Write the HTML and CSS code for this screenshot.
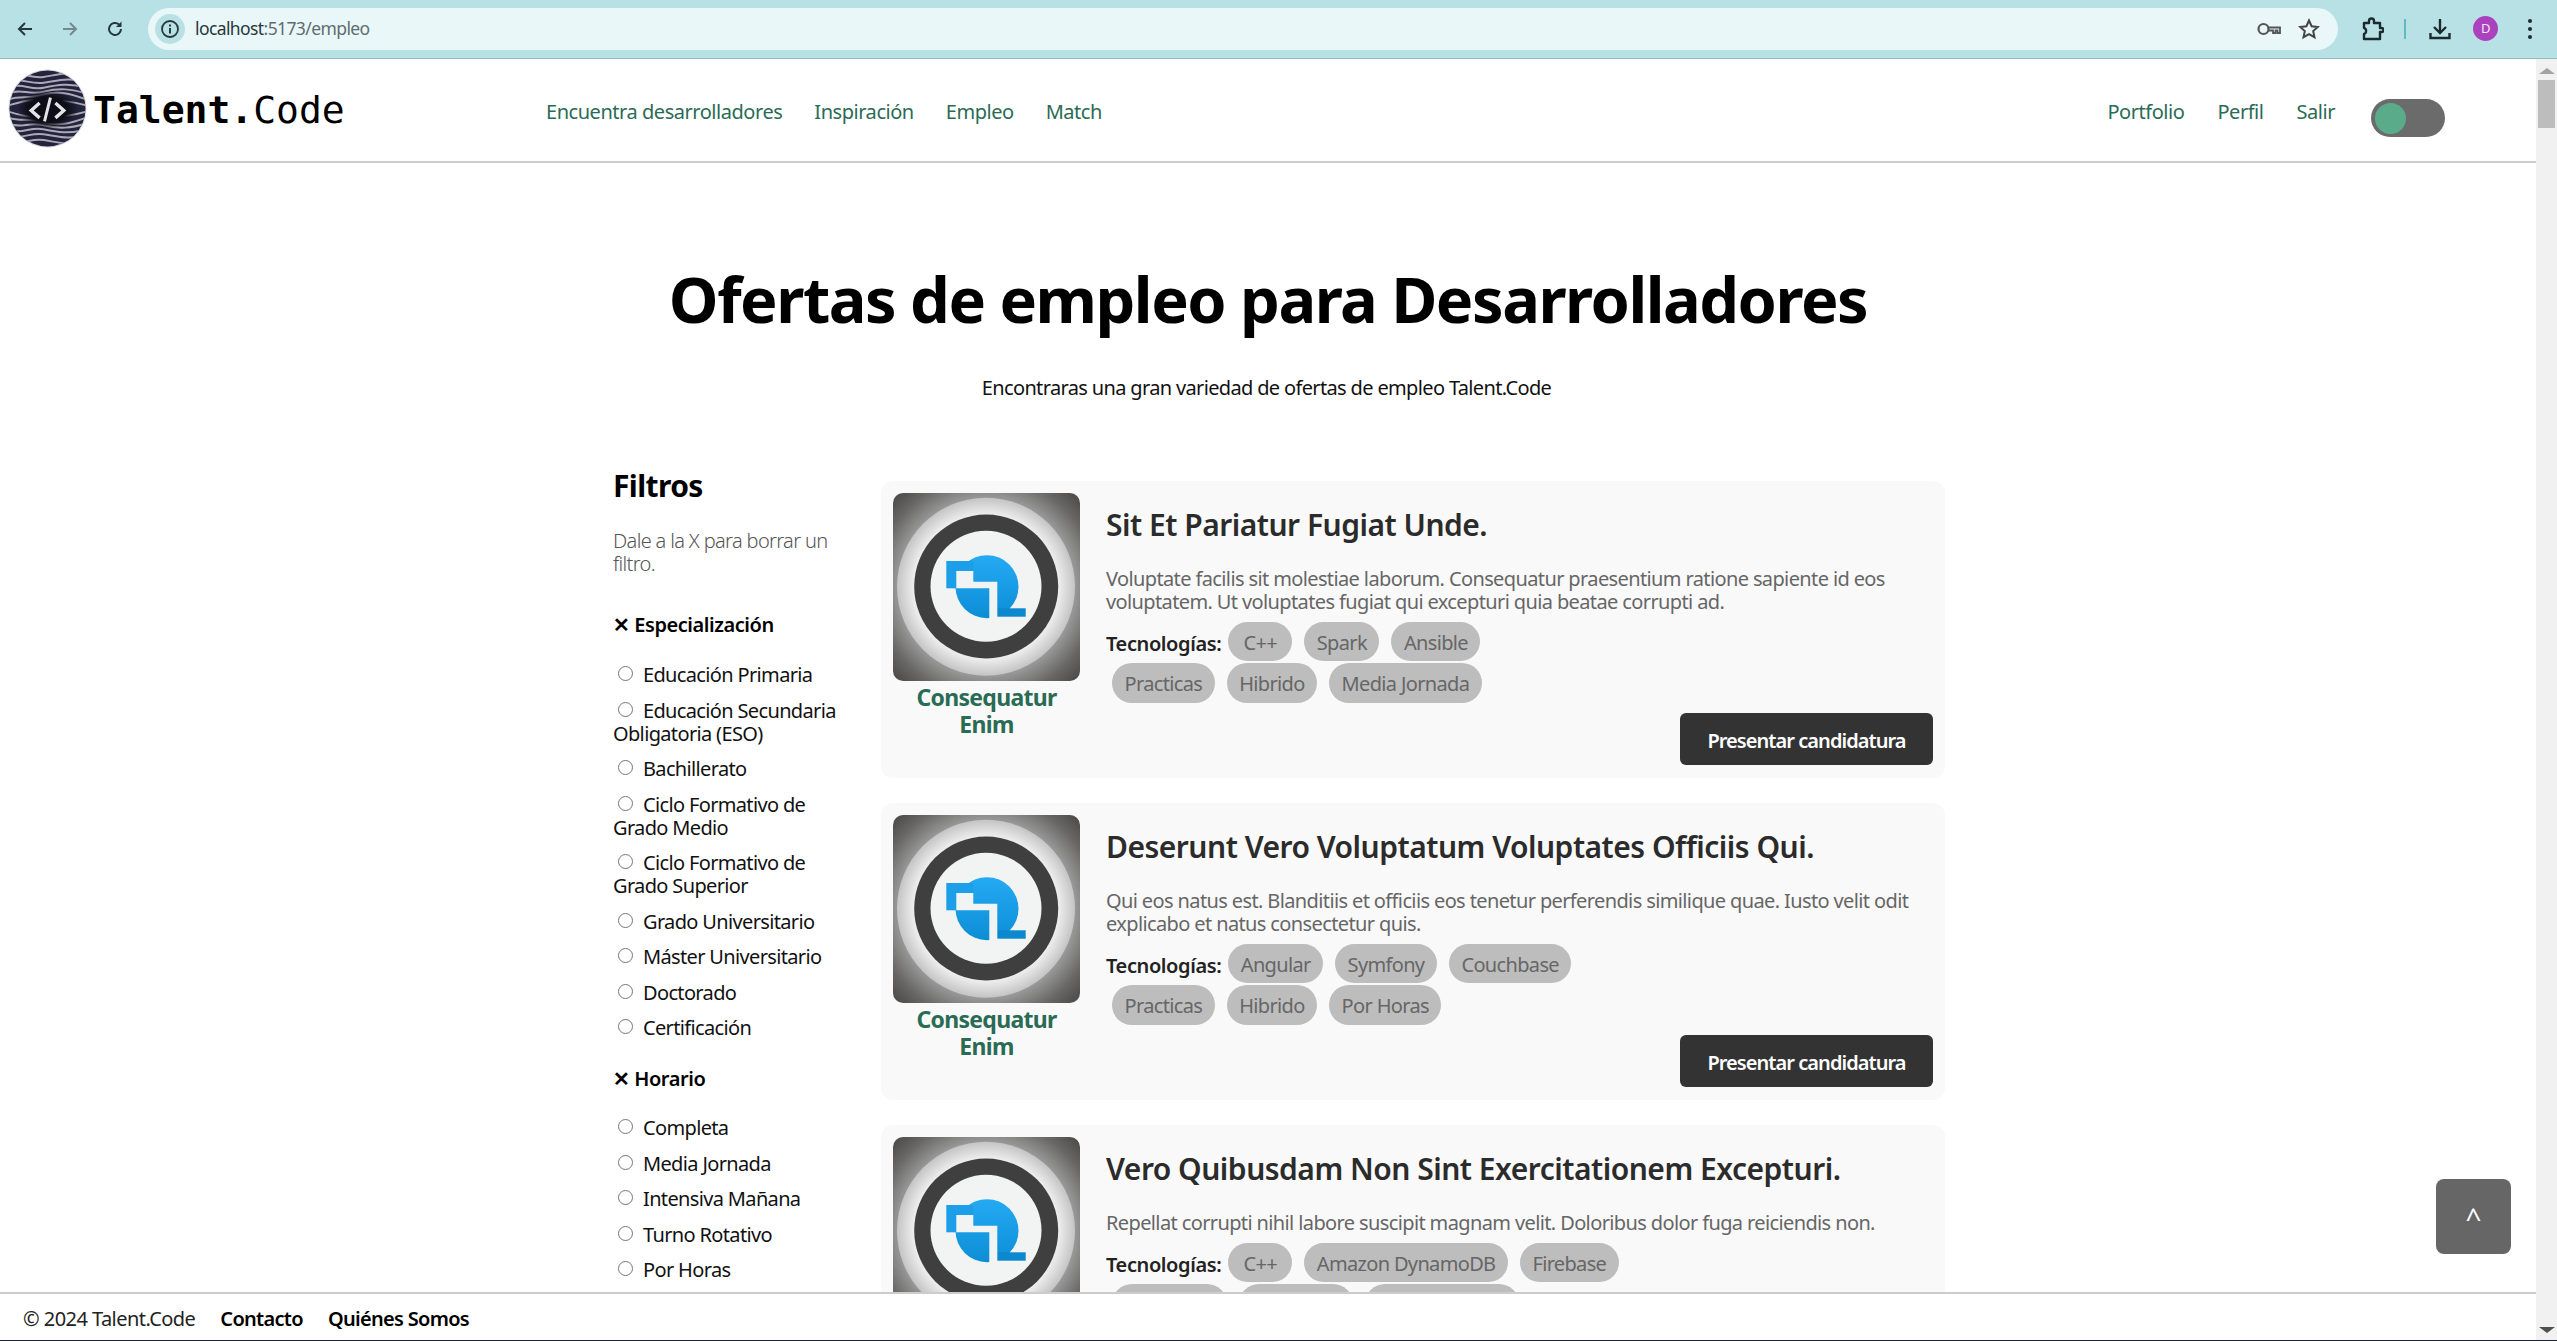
FILE: index.html
```html
<!DOCTYPE html>
<html lang="es">
<head>
    <meta charset="UTF-8">
    <meta name="viewport" content="width=device-width, initial-scale=1.0">
    <title>Talent.Code - Empleo</title>
    <link rel="stylesheet" href="styles.css">
</head>
<body>
    <svg class="defs" width="0" height="0">
        <defs>
            <radialGradient id="bg-grad" cx="50%" cy="50%" r="72%">
                <stop offset="62%" stop-color="#a4a4a4"/>
                <stop offset="82%" stop-color="#686766"/>
                <stop offset="100%" stop-color="#434241"/>
            </radialGradient>
            <radialGradient id="ring-grad" cx="50%" cy="50%" r="50%">
                <stop offset="82%" stop-color="#ececec"/>
                <stop offset="100%" stop-color="#c4c4c4"/>
            </radialGradient>
            <linearGradient id="blue-grad" x1="0" y1="0" x2="0" y2="1">
                <stop offset="0%" stop-color="#24aaf3"/>
                <stop offset="100%" stop-color="#0c8ed6"/>
            </linearGradient>
            <radialGradient id="eye-grad" cx="50%" cy="50%" r="50%">
                <stop offset="65%" stop-color="#0e0e18"/>
                <stop offset="100%" stop-color="#0e0e18" stop-opacity="0"/>
            </radialGradient>
            <clipPath id="logo-clip"><circle cx="40" cy="40" r="38.500"/></clipPath>
            <symbol id="company" viewBox="0 0 187 188">
                <rect width="187" height="188" rx="10" fill="url(#bg-grad)"/>
                <circle cx="93" cy="93.700" r="89" fill="url(#ring-grad)"/>
                <circle cx="93.200" cy="93.500" r="72" fill="#3f3f3f"/>
                <circle cx="93" cy="93.300" r="55.500" fill="#f2f4f4"/>
                <circle cx="94" cy="93.700" r="31.500" fill="url(#blue-grad)"/>
                <rect x="53.300" y="68" width="27" height="27.300" fill="#1c9fe8"/>
                <rect x="104.300" y="115.300" width="28.400" height="8.400" fill="#0c88cf"/>
                <path d="M63.300 78H80.300V88.700H104.300V127H96.300V95.300H63.300Z" fill="#f2f4f4"/>
            </symbol>
        </defs>
    </svg>

    <div class="browser-bar">
        <svg class="bar-icon back" width="18" height="18" viewBox="0 0 18 18"><path d="M16 9H3M9 3L3 9l6 6" fill="none" stroke="#26383c" stroke-width="2"/></svg>
        <svg class="bar-icon forward" width="18" height="18" viewBox="0 0 18 18"><path d="M2 9h13M9 3l6 6-6 6" fill="none" stroke="#75888c" stroke-width="2"/></svg>
        <svg class="bar-icon reload" width="18" height="18" viewBox="0 0 18 18"><path d="M15 9a6 6 0 1 1-2-4.500" fill="none" stroke="#26383c" stroke-width="2"/><path d="M15.500 1.500v5.500H10z" fill="#26383c"/></svg>
        <div class="url-box">
            <span class="info-badge">
                <svg width="20" height="20" viewBox="0 0 20 20"><circle cx="10" cy="10" r="8" fill="none" stroke="#26383c" stroke-width="1.800"/><path d="M10 9v5.500M10 5.500v2" stroke="#26383c" stroke-width="2"/></svg>
            </span>
            <span class="url-text">localhost<span class="url-rest">:5173/empleo</span></span>
            <svg class="url-key" width="24" height="14" viewBox="0 0 24 14"><circle cx="6.500" cy="7" r="5" fill="none" stroke="#555" stroke-width="2.200"/><path d="M11 5.500h12v5.500h-2.500V8.500h-2v2.500h-2.500V8.500H11" fill="none" stroke="#555" stroke-width="1.800"/></svg>
            <svg class="url-star" width="22" height="22" viewBox="0 0 22 22"><path d="M11 2.500l2.600 5.700 6.200.700-4.600 4.200 1.300 6.100L11 16.100l-5.500 3.100 1.300-6.100-4.600-4.200 6.200-.700z" fill="none" stroke="#444" stroke-width="2"/></svg>
        </div>
        <svg class="bar-icon puzzle" width="22" height="24" viewBox="0 0 22 24"><path d="M2 6h5V4a2.500 2.500 0 0 1 5 0v2h6v5h1.500a2 2 0 0 1 0 4H18v7H2v-5a2.500 2.500 0 0 0 2-3 2.500 2.500 0 0 0-2-3z" fill="none" stroke="#1d2a2d" stroke-width="2.400" stroke-linejoin="round"/></svg>
        <span class="bar-divider"></span>
        <svg class="bar-icon download" width="22" height="22" viewBox="0 0 22 22"><path d="M11 1v13M5 9l6 6 6-6M1.500 15v5h19v-5" fill="none" stroke="#1d2a2d" stroke-width="2.400"/></svg>
        <span class="avatar">D</span>
        <span class="dots"><i></i><i></i><i></i></span>
    </div>

    <div class="window">
        <div class="page">
            <header class="topbar">
                <a class="brand" href="#">
                    <svg class="brand-logo" width="79" height="79" viewBox="0 0 80 80">
                        <circle cx="40" cy="40" r="39.500" fill="#d4d6dc"/>
                        <circle cx="40" cy="40" r="38.500" fill="#23233c"/>
                        <g clip-path="url(#logo-clip)" fill="none" stroke="#a9a9b8" stroke-width="2">
                            <path d="M0 7c14-5 22 3 36 1s26-6 44-1"/>
                            <path d="M0 13c14-5 22 3 36 1s26-6 44-1"/>
                            <path d="M0 19c14-6 22 3 36 0s26-5 44 0"/>
                            <path d="M0 25c14-6 20 2 36-2s28-3 44 2"/>
                            <path d="M0 31c12-5 20 0 36-5s30 0 44 5"/>
                            <path d="M0 37c14-4 20-6 36-6s30 2 44 6"/>
                            <path d="M0 43c14 4 20 6 36 6s30-2 44-6"/>
                            <path d="M0 49c12 5 20 0 36 5s30 0 44-5"/>
                            <path d="M0 55c14 6 20-2 36 2s28 3 44-2"/>
                            <path d="M0 61c14 6 22-3 36 0s26 5 44 0"/>
                            <path d="M0 67c14 5 22-3 36-1s26 6 44 1"/>
                            <path d="M0 73c14 5 22-3 36-1s26 6 44 1"/>
                        </g>
                        <ellipse cx="40" cy="41" rx="31" ry="20" fill="url(#eye-grad)"/>
                        <path d="M32 34.500L23.500 42l8.500 7.500M48 34.500l8.500 7.500-8.500 7.500" fill="none" stroke="#e4e4e8" stroke-width="3.400"/>
                        <path d="M43 29L37 53" stroke="#e4e4e8" stroke-width="3"/>
                    </svg>
                    <span class="brand-name"><b>Talent.</b>Code</span>
                </a>
                <nav class="nav-main">
                    <a href="#">Encuentra desarrolladores</a>
                    <a href="#">Inspiración</a>
                    <a href="#">Empleo</a>
                    <a href="#">Match</a>
                </nav>
                <nav class="nav-user">
                    <a href="#">Portfolio</a>
                    <a href="#">Perfil</a>
                    <a href="#">Salir</a>
                </nav>
                <div class="toggle"><span class="knob"></span></div>
            </header>

            <main class="content">
                <h1>Ofertas de empleo para Desarrolladores</h1>
                <p class="lead">Encontraras una gran variedad de ofertas de empleo Talent.Code</p>

                <div class="layout">
                    <aside class="filters">
                        <h2>Filtros</h2>
                        <p class="filters-note">Dale a la X para borrar un filtro.</p>

                        <h3><span class="clear">✕</span> Especialización</h3>
                        <label class="opt"><input type="radio" name="esp">Educación Primaria</label>
                        <label class="opt"><input type="radio" name="esp">Educación Secundaria Obligatoria (ESO)</label>
                        <label class="opt"><input type="radio" name="esp">Bachillerato</label>
                        <label class="opt"><input type="radio" name="esp">Ciclo Formativo de Grado Medio</label>
                        <label class="opt"><input type="radio" name="esp">Ciclo Formativo de Grado Superior</label>
                        <label class="opt"><input type="radio" name="esp">Grado Universitario</label>
                        <label class="opt"><input type="radio" name="esp">Máster Universitario</label>
                        <label class="opt"><input type="radio" name="esp">Doctorado</label>
                        <label class="opt"><input type="radio" name="esp">Certificación</label>

                        <h3><span class="clear">✕</span> Horario</h3>
                        <label class="opt"><input type="radio" name="hor">Completa</label>
                        <label class="opt"><input type="radio" name="hor">Media Jornada</label>
                        <label class="opt"><input type="radio" name="hor">Intensiva Mañana</label>
                        <label class="opt"><input type="radio" name="hor">Turno Rotativo</label>
                        <label class="opt"><input type="radio" name="hor">Por Horas</label>
                    </aside>

                    <section class="jobs">
                        <article class="job">
                            <div class="job-company">
                                <svg class="job-img" width="187" height="188"><use href="#company"/></svg>
                                <a href="#">Consequatur Enim</a>
                            </div>
                            <div class="job-body">
                                <h2>Sit Et Pariatur Fugiat Unde.</h2>
                                <p>Voluptate facilis sit molestiae laborum. Consequatur praesentium ratione sapiente id eos voluptatem. Ut voluptates fugiat qui excepturi quia beatae corrupti ad.</p>
                                <div class="tags"><strong>Tecnologías:</strong><span>C++</span><span>Spark</span><span>Ansible</span></div>
                                <div class="tags tags-info"><span>Practicas</span><span>Hibrido</span><span>Media Jornada</span></div>
                                <a class="apply" href="#">Presentar candidatura</a>
                            </div>
                        </article>

                        <article class="job">
                            <div class="job-company">
                                <svg class="job-img" width="187" height="188"><use href="#company"/></svg>
                                <a href="#">Consequatur Enim</a>
                            </div>
                            <div class="job-body">
                                <h2>Deserunt Vero Voluptatum Voluptates Officiis Qui.</h2>
                                <p>Qui eos natus est. Blanditiis et officiis eos tenetur perferendis similique quae. Iusto velit odit explicabo et natus consectetur quis.</p>
                                <div class="tags"><strong>Tecnologías:</strong><span>Angular</span><span>Symfony</span><span>Couchbase</span></div>
                                <div class="tags tags-info"><span>Practicas</span><span>Hibrido</span><span>Por Horas</span></div>
                                <a class="apply" href="#">Presentar candidatura</a>
                            </div>
                        </article>

                        <article class="job">
                            <div class="job-company">
                                <svg class="job-img" width="187" height="188"><use href="#company"/></svg>
                                <a href="#">Consequatur Enim</a>
                            </div>
                            <div class="job-body">
                                <h2>Vero Quibusdam Non Sint Exercitationem Excepturi.</h2>
                                <p>Repellat corrupti nihil labore suscipit magnam velit. Doloribus dolor fuga reiciendis non.</p>
                                <div class="tags"><strong>Tecnologías:</strong><span>C++</span><span>Amazon DynamoDB</span><span>Firebase</span></div>
                                <div class="tags tags-info"><span>Indefinido</span><span>Presencial</span><span>Turno Rotativo</span></div>
                                <a class="apply" href="#">Presentar candidatura</a>
                            </div>
                        </article>
                    </section>
                </div>
            </main>

            <footer class="footer">
                <span>© 2024 Talent.Code</span>
                <a href="#">Contacto</a>
                <a href="#">Quiénes Somos</a>
            </footer>

            <button class="to-top" type="button">^</button>
        </div>

        <div class="scrollbar">
            <span class="arrow-up"></span>
            <span class="thumb"></span>
            <span class="arrow-down"></span>
        </div>
    </div>
</body>
</html>
```

FILE: styles.css
```css
* {
    box-sizing: border-box;
}
html, body {
    height: 100%;
}
body {
    font-family: "Noto Sans", "Open Sans", sans-serif;
    font-size: 20px;
    line-height: 23px;
    letter-spacing: -0.65px;
    margin: 0;
    overflow: hidden;
    background: #fff;
    color: #222;
    display: flex;
    flex-direction: column;
    border-bottom: 1px solid #1c2433;
}
a {
    color: inherit;
    text-decoration: none;
}
.defs {
    position: absolute;
}

/* browser chrome */
.browser-bar {
    flex: none;
    height: 59px;
    background: #b8e1e6;
    border-bottom: 1px solid #93bcc2;
    display: flex;
    align-items: center;
    padding-bottom: 1px;
    position: relative;
}
.bar-icon {
    flex: none;
}
.back {
    margin-left: 16px;
}
.forward {
    margin-left: 27px;
}
.reload {
    margin-left: 27px;
}
.url-box {
    flex: none;
    width: 2190px;
    height: 42px;
    margin-left: 24px;
    margin-right: 24px;
    background: #eaf7f8;
    border-radius: 21px;
    display: flex;
    align-items: center;
    padding-left: 7px;
    padding-right: 18px;
}
.info-badge {
    width: 30px;
    height: 30px;
    border-radius: 50%;
    background: #b8e1e6;
    display: flex;
    align-items: center;
    justify-content: center;
}
.url-text {
    margin-left: 10px;
    font-size: 17.5px;
    letter-spacing: -0.6px;
    color: #26383c;
}
.url-rest {
    color: #5d6d70;
}
.url-key {
    margin-left: auto;
}
.url-star {
    margin-left: 17px;
}
.bar-divider {
    width: 2px;
    height: 20px;
    background: #62b9c2;
    margin-left: 20px;
}
.download {
    margin-left: 23px;
}
.avatar {
    width: 25px;
    height: 25px;
    margin-left: 22px;
    border-radius: 50%;
    background: #ab42bd;
    color: #f5e6f8;
    font-size: 13px;
    line-height: 25px;
    text-align: center;
}
.dots {
    display: flex;
    flex-direction: column;
    gap: 4px;
    margin-left: 30px;
}
.dots i {
    width: 4px;
    height: 4px;
    border-radius: 50%;
    background: #1d2a2d;
}

/* page + scrollbar */
.window {
    flex: 1;
    min-height: 0;
    display: flex;
}
.page {
    flex: 1;
    min-width: 0;
    display: flex;
    flex-direction: column;
    position: relative;
}
.scrollbar {
    flex: none;
    width: 21px;
    background: #f1f1f1;
    display: flex;
    flex-direction: column;
    align-items: center;
    padding-top: 9px;
    padding-bottom: 7px;
}
.arrow-up {
    border-left: 8px solid transparent;
    border-right: 8px solid transparent;
    border-bottom: 6px solid #a3a3a3;
}
.thumb {
    width: 17px;
    height: 48px;
    margin-top: 6px;
    background: #bdbdbd;
}
.arrow-down {
    margin-top: auto;
    border-left: 8px solid transparent;
    border-right: 8px solid transparent;
    border-top: 6px solid #505050;
}

/* top navigation */
.topbar {
    flex: none;
    height: 104px;
    border-bottom: 2px solid #ccc;
    display: flex;
    align-items: center;
    color: #2a6b55;
    letter-spacing: -0.46px;
}
.brand {
    display: flex;
    align-items: center;
    width: 546px;
    padding-left: 8px;
    margin-top: -4px;
    color: #000;
}
.brand-name {
    font-family: "DejaVu Sans Mono", "Liberation Mono", monospace;
    font-size: 38px;
    letter-spacing: 0;
    line-height: 40px;
    margin-left: 6px;
    margin-top: 3px;
}
.nav-main,
.nav-user {
    display: flex;
    gap: 32px;
    margin-top: 3px;
}
.nav-user {
    margin-left: auto;
    gap: 33px;
}
.toggle {
    width: 74px;
    height: 38px;
    margin-left: 36px;
    margin-right: 91px;
    margin-top: 16px;
    border-radius: 19px;
    background: #6b6b6b;
    display: flex;
    align-items: center;
    padding-left: 4px;
}
.knob {
    width: 31px;
    height: 31px;
    border-radius: 50%;
    background: #5aab8a;
}

/* main content */
.content {
    flex: 1;
    min-height: 0;
    overflow: hidden;
    padding-top: 97px;
    color: #111;
}
h1 {
    margin: 0;
    font-size: 63px;
    line-height: 78px;
    font-weight: 700;
    letter-spacing: -1.48px;
    text-align: center;
    color: #000;
}
.lead {
    margin: 38px 0 0;
    padding-right: 3px;
    text-align: center;
}
.layout {
    display: flex;
    margin-top: 71px;
    margin-left: 613px;
    width: 1332px;
}

/* filter column */
.filters {
    flex: none;
    width: 268px;
    padding-right: 30px;
}
.filters h2 {
    margin: -2px 0 0;
    font-size: 30px;
    line-height: 35px;
    font-weight: 700;
    letter-spacing: -0.6px;
    color: #000;
}
.filters-note {
    margin: 26px 0 0;
    font-weight: 300;
    color: #555;
}
.filters h3 {
    margin: 28px 0 26px;
    font-size: 20px;
    line-height: 23px;
    font-weight: 600;
    letter-spacing: -0.45px;
    color: #000;
}
.filters-note + h3 {
    margin-top: 38px;
    margin-bottom: 27px;
}
.clear {
    font-weight: 700;
}
.opt {
    display: block;
    margin-bottom: 12.5px;
}
.opt input {
    appearance: none;
    width: 15px;
    height: 15px;
    margin: 0 10px 0 5px;
    border: 1.5px solid #767676;
    border-radius: 50%;
    background: #fff;
    vertical-align: 1px;
}

/* job cards */
.jobs {
    flex: 1;
    min-width: 0;
    padding-top: 11px;
    display: flex;
    flex-direction: column;
    gap: 25px;
}
.job {
    flex: none;
    min-height: 297px;
    padding: 12px 12px 13px;
    border-radius: 12px;
    background: #f9f9f9;
    display: flex;
    gap: 26px;
}
.job-company {
    flex: none;
    width: 187px;
    text-align: center;
    font-weight: 700;
    font-size: 23px;
    line-height: 27px;
    letter-spacing: -0.7px;
    color: #2a6b55;
}
.job-img {
    display: block;
    margin-bottom: 3px;
}
.job-company a {
    display: block;
    padding: 0 10px;
}
.job-body {
    flex: 1;
    min-width: 0;
    display: flex;
    flex-direction: column;
}
.job-body h2 {
    margin: 14px 0 0;
    font-size: 30px;
    line-height: 36px;
    font-weight: 600;
    letter-spacing: -0.5px;
    color: #2b2b2b;
}
.job-body p {
    margin: 24px 0 0;
    letter-spacing: -0.62px;
    color: #666;
}
.tags {
    display: flex;
    align-items: center;
    margin-top: 9px;
}
.tags strong {
    font-weight: 600;
    letter-spacing: -0.4px;
    color: #222;
    margin-right: 1px;
    padding-top: 3px;
}
.tags span {
    margin: 0 6px;
    min-width: 64px;
    height: 39px;
    line-height: 42px;
    padding: 0 12.5px;
    border-radius: 20px;
    background: #bdbdbd;
    color: #666;
    letter-spacing: -0.66px;
    text-align: center;
}
.tags-info {
    margin-top: 2px;
}
.tags-info span {
    height: 40px;
}
.apply {
    align-self: flex-end;
    margin-top: auto;
    width: 253px;
    height: 52px;
    border-radius: 6px;
    background: #333;
    color: #fff;
    font-weight: 600;
    letter-spacing: -0.95px;
    line-height: 55px;
    text-align: center;
}

/* footer */
.footer {
    flex: none;
    height: 48px;
    border-top: 2px solid #ccc;
    background: #fff;
    display: flex;
    align-items: center;
    gap: 25px;
    padding-left: 23px;
    padding-top: 2px;
    color: #222;
    letter-spacing: -0.55px;
}
.footer a {
    font-weight: 600;
    letter-spacing: -0.7px;
    color: #000;
}

/* back to top, floats over the page */
.to-top {
    position: absolute;
    right: 25px;
    bottom: 86px;
    width: 75px;
    height: 75px;
    border: 0;
    border-radius: 8px;
    background: #666;
    color: #fff;
    font-family: inherit;
    font-size: 28px;
    padding: 0;
}
```
